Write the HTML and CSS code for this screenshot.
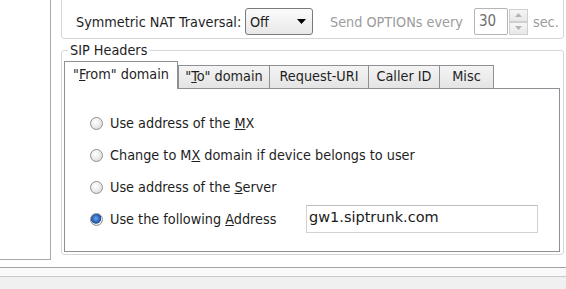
FILE: index.html
```html
<!DOCTYPE html>
<html>
<head>
<meta charset="utf-8">
<link rel="stylesheet" href="styles.css">
</head>
<body>
<div class="page">
  <div class="main">
    <div class="leftpanel"></div>
    <div class="content">
      <div class="natbox">
        <div class="natrow">
          <span class="natlabel">Symmetric NAT Traversal:</span>
          <div class="select">
            <span class="selval">Off</span>
            <svg class="selarrow" width="9" height="5" viewBox="0 0 9 5"><path d="M0 0H9L4.5 5Z" fill="#000"/></svg>
          </div>
          <span class="optlabel">Send OPTIONs every</span>
          <div class="numbox">30</div>
          <div class="spin">
            <div class="spinbtn"><svg width="7" height="4" viewBox="0 0 7 4"><path d="M0 4H7L3.5 0Z" fill="#b4b4b4"/></svg></div>
            <div class="spinbtn"><svg width="7" height="4" viewBox="0 0 7 4"><path d="M0 0H7L3.5 4Z" fill="#b4b4b4"/></svg></div>
          </div>
          <span class="seclabel">sec.</span>
        </div>
      </div>
      <div class="sipbox">
        <div class="siptitle">SIP Headers</div>
        <div class="tabs">
          <div class="tab active w1">"<u>F</u>rom" domain</div>
          <div class="tab w2">"<u>T</u>o" domain</div>
          <div class="tab w3">Request-URI</div>
          <div class="tab w4">Caller ID</div>
          <div class="tab w5">Misc</div>
        </div>
        <div class="panel">
          <div class="row"><span class="radio"></span><span class="rlabel">Use address of the <u>M</u>X</span></div>
          <div class="row"><span class="radio"></span><span class="rlabel">Change to M<u>X</u> domain if device belongs to user</span></div>
          <div class="row"><span class="radio"></span><span class="rlabel">Use address of the <u>S</u>erver</span></div>
          <div class="row"><span class="radio on"></span><span class="rlabel grow">Use the following <u>A</u>ddress</span><div class="addr">gw1.siptrunk.com</div></div>
        </div>
      </div>
    </div>
  </div>
  <div class="sep"></div>
  <div class="footer"><div class="fbtn"></div></div>
</div>
</body>
</html>
```
FILE: styles.css
```css
html, body {
  margin: 0;
  padding: 0;
  background: #ffffff;
}
.page {
  width: 566px;
  height: 289px;
  overflow: hidden;
  display: flex;
  flex-direction: column;
  font-family: "DejaVu Sans Condensed", "DejaVu Sans", sans-serif;
  font-size: 14.3px;
  color: #1e1e1e;
}
.main {
  height: 267px;
  display: flex;
  flex-shrink: 0;
}
.leftpanel {
  width: 50px;
  height: 259px;
  border-right: 1px solid #a9a9a9;
  border-bottom: 1px solid #a9a9a9;
  background: #fff;
}
.content {
  margin-left: 10px;
  width: 503px;
  display: flex;
  flex-direction: column;
}
.natbox {
  margin-top: -8px;
  height: 47px;
  box-sizing: border-box;
  border: 1px solid #d6d6d6;
  border-radius: 3px;
  padding-top: 15px;
  padding-left: 14px;
}
.natrow {
  display: flex;
  align-items: center;
  height: 27px;
}
.natlabel {
  width: 169px;
  white-space: nowrap;
}
.select {
  width: 68px;
  height: 27px;
  box-sizing: border-box;
  border: 1px solid #7a7a7a;
  border-radius: 3px;
  background: linear-gradient(#fbfbfb, #e8e8e8);
  display: flex;
  align-items: center;
  padding: 0 6px 0 4px;
}
.selval {
  flex: 1;
}
.optlabel {
  margin-left: 17px;
  width: 144px;
  white-space: nowrap;
  color: #9c9c9c;
}
.numbox {
  width: 34px;
  height: 27px;
  box-sizing: border-box;
  border: 1px solid #b5b5b5;
  border-radius: 2px;
  padding-left: 4px;
  line-height: 25px;
  color: #6e6e6e;
  font-size: 15px;
}
.spin {
  margin-left: 1px;
  width: 19px;
  height: 26px;
  display: flex;
  flex-direction: column;
}
.spinbtn {
  flex: 1;
  box-sizing: border-box;
  border: 1px solid #cfcfcf;
  background: linear-gradient(#f6f6f6, #e8e8e8);
  display: flex;
  align-items: center;
  justify-content: center;
}
.seclabel {
  margin-left: 5px;
  color: #9c9c9c;
}
.sipbox {
  margin-top: 11px;
  height: 205px;
  box-sizing: border-box;
  border: 1px solid #d6d6d6;
  border-radius: 3px;
  padding: 0 3px 2px 2px;
  display: flex;
  flex-direction: column;
}
.siptitle {
  margin: -9px 0 0 4px;
  padding: 0 2px;
  line-height: 16px;
  background: #fff;
  align-self: flex-start;
}
.tabs {
  margin-top: 3px;
  height: 27px;
  display: flex;
  align-items: flex-end;
}
.tab {
  height: 23px;
  box-sizing: border-box;
  border: 1px solid #8d8f95;
  border-bottom: none;
  background: linear-gradient(#f4f4f4, #e4e4e4);
  text-align: center;
  line-height: 21px;
  white-space: nowrap;
}
.tab.active {
  height: 28px;
  margin-bottom: -1px;
  background: #fff;
  position: relative;
  z-index: 1;
  line-height: 24px;
}
.w1 { width: 114px; }
.w2 { width: 92px; }
.w3 { width: 100px; margin-left: -1px; }
.w4 { width: 72px; margin-left: -1px; }
.w5 { width: 55px; margin-left: -1px; }
.panel {
  flex: 1;
  border: 1px solid #8d8f95;
  background: #fff;
  padding: 18px 0 0 25px;
}
.row {
  height: 32px;
  display: flex;
  align-items: center;
}
.radio {
  width: 13px;
  height: 13px;
  box-sizing: border-box;
  border-radius: 50%;
  border: 1px solid #8f8f8f;
  background: radial-gradient(circle at 40% 35%, #ffffff 0%, #e9e9e9 55%, #cfcfcf 100%);
  margin-right: 7px;
  flex-shrink: 0;
}
.radio.on {
  background: radial-gradient(circle at 45% 40%, #6fa6e6 0%, #2660b8 45%, #1c4f9c 55%, #ededed 62%, #d4d4d4 100%);
}
.grow {
  flex: 1;
}
.addr {
  width: 232px;
  height: 28px;
  box-sizing: border-box;
  border: 1px solid #d2d2d2;
  border-top-color: #bdbdbd;
  margin-right: 21px;
  font-family: "DejaVu Sans", sans-serif;
  font-size: 14.5px;
  color: #1a1a1a;
  padding-left: 2px;
  line-height: 22px;
}
.sep {
  height: 8px;
  flex-shrink: 0;
  border-top: 1px solid #a3a3a3;
  border-bottom: 1px solid #c8c8c8;
  background: #f9f9f9;
}
.footer {
  flex: 1;
  background: #f0f0f0;
  display: flex;
  justify-content: flex-end;
  padding-top: 12px;
}
.fbtn {
  width: 94px;
  height: 10px;
  border-top: 1px solid #a8a8a8;
  border-left: 1px solid #a8a8a8;
  border-radius: 3px 0 0 0;
  background: #f4f4f4;
}
```
